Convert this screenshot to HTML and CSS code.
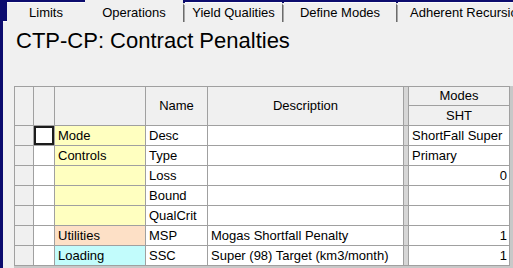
FILE: index.html
```html
<!DOCTYPE html>
<html lang="en">
<head>
  <meta charset="UTF-8">
  <title>CTP-CP: Contract Penalties</title>
  <link rel="stylesheet" href="styles.css">
</head>
<body>
  <div class="window">
    <!-- tab strip -->
    <div class="tabs">
      <div class="tab tab-limits">Limits</div>
      <div class="tab tab-active tab-ops">Operations</div>
      <span class="sep"></span>
      <div class="tab tab-yield">Yield Qualities</div>
      <span class="sep"></span>
      <div class="tab tab-modes">Define Modes</div>
      <span class="sep"></span>
      <div class="tab tab-last">Adherent Recursion</div>
    </div>

    <div class="page">
      <h1 class="title">CTP-CP: Contract Penalties</h1>

      <div class="grid-wrap">
        <div class="grid">
          <!-- header -->
          <div class="cell head span2"></div>
          <div class="cell head span2"></div>
          <div class="cell head span2"></div>
          <div class="cell head span2 center">Name</div>
          <div class="cell head span2 center">Description</div>
          <div class="cell split span2"></div>
          <div class="cell head center">Modes</div>
          <div class="cell head center sht">SHT</div>

          <!-- rows -->
          <div class="cell rowhead"></div>
          <div class="cell focus"></div>
          <div class="cell cat-yellow">Mode</div>
          <div class="cell">Desc</div>
          <div class="cell"></div>
          <div class="cell split"></div>
          <div class="cell">ShortFall Super</div>

          <div class="cell rowhead"></div>
          <div class="cell"></div>
          <div class="cell cat-yellow">Controls</div>
          <div class="cell">Type</div>
          <div class="cell"></div>
          <div class="cell split"></div>
          <div class="cell">Primary</div>

          <div class="cell rowhead"></div>
          <div class="cell"></div>
          <div class="cell cat-yellow"></div>
          <div class="cell">Loss</div>
          <div class="cell"></div>
          <div class="cell split"></div>
          <div class="cell num">0</div>

          <div class="cell rowhead"></div>
          <div class="cell"></div>
          <div class="cell cat-yellow"></div>
          <div class="cell">Bound</div>
          <div class="cell"></div>
          <div class="cell split"></div>
          <div class="cell"></div>

          <div class="cell rowhead"></div>
          <div class="cell"></div>
          <div class="cell cat-yellow"></div>
          <div class="cell">QualCrit</div>
          <div class="cell"></div>
          <div class="cell split"></div>
          <div class="cell"></div>

          <div class="cell rowhead"></div>
          <div class="cell"></div>
          <div class="cell cat-peach">Utilities</div>
          <div class="cell">MSP</div>
          <div class="cell">Mogas Shortfall Penalty</div>
          <div class="cell split"></div>
          <div class="cell num">1</div>

          <div class="cell rowhead"></div>
          <div class="cell"></div>
          <div class="cell cat-cyan">Loading</div>
          <div class="cell">SSC</div>
          <div class="cell">Super (98) Target (km3/month)</div>
          <div class="cell split"></div>
          <div class="cell num">1</div>
        </div>
      </div>
    </div>
  </div>
</body>
</html>
```

FILE: styles.css
```css
body {
  margin: 0;
  background: #f0f0f0;
  font-family: "Liberation Sans", Arial, sans-serif;
  font-size: 13px;
  color: #000;
  overflow: hidden;
}
.window {
  border-left: 3px solid #0c0c6e;
  height: 268px;
  box-sizing: border-box;
}

/* tabs */
.tabs {
  display: flex;
  align-items: flex-end;
  height: 22px;
  padding-left: 4px;
  background: #0c0c6e;
  white-space: nowrap;
  overflow: hidden;
}
.tab {
  height: 18px;
  padding-top: 1px;
  line-height: 18px;
  text-align: center;
  background: #f0f0f0;
  border-top: 1px solid #fcfcfc;
  flex: none;
}
.tab-active {
  height: 22px;
  padding-top: 0;
  line-height: 18px;
  padding-top: 4px;
  box-sizing: border-box;
  border-top: none;
}
.tab-limits { width: 78px; }
.tab-ops { width: 98px; }
.tab-yield { width: 97px; }
.tab-modes { width: 112px; }
.tab-last {
  flex: 1;
  text-align: left;
  padding-left: 12px;
  overflow: hidden;
}
.sep {
  flex: none;
  width: 1px;
  height: 17px;
  border-left: 1px solid #6c6c6c;
  background: #a8a8a8;
  border-top: 2px solid #f0f0f0;
  box-sizing: content-box;
}

/* content */
.page {
  border-top: 1px solid #fcfcfc;
  margin-top: -1px;
}
.title {
  margin: 8px 0 0 13px;
  font-size: 22px;
  font-weight: normal;
  line-height: 22px;
}
.grid-wrap {
  margin: 34px 0 0 11px;
  background: #c8c8c8;
  padding-bottom: 4px;
}
.grid {
  display: grid;
  grid-template-columns: 18px 20px 90px 61px 195px 4px 100px;
  grid-template-rows: 18px 19px repeat(7, 19px);
  gap: 1px;
  width: max-content;
  background: #a0a0a0;
  border: 1px solid #a0a0a0;
}
.cell {
  background: #fff;
  line-height: 18px;
  padding: 1px 3px 0;
  white-space: nowrap;
  overflow: hidden;
}
.head {
  background: #f0f0f0;
  padding-top: 0;
}
.span2 {
  grid-row: span 2;
}
.center {
  display: flex;
  align-items: center;
  justify-content: center;
}
.sht {
  padding-top: 1px;
}
.rowhead {
  background: #f0f0f0;
}
.split {
  background: #d6d6d6;
  padding: 0;
}
.focus {
  box-shadow: inset 0 0 0 2px #1c1c1c;
}
.cat-yellow { background: #ffffc0; }
.cat-peach { background: #fde0c6; }
.cat-cyan { background: #c2fcfc; }
.num {
  text-align: right;
  padding-right: 2px;
}
```
